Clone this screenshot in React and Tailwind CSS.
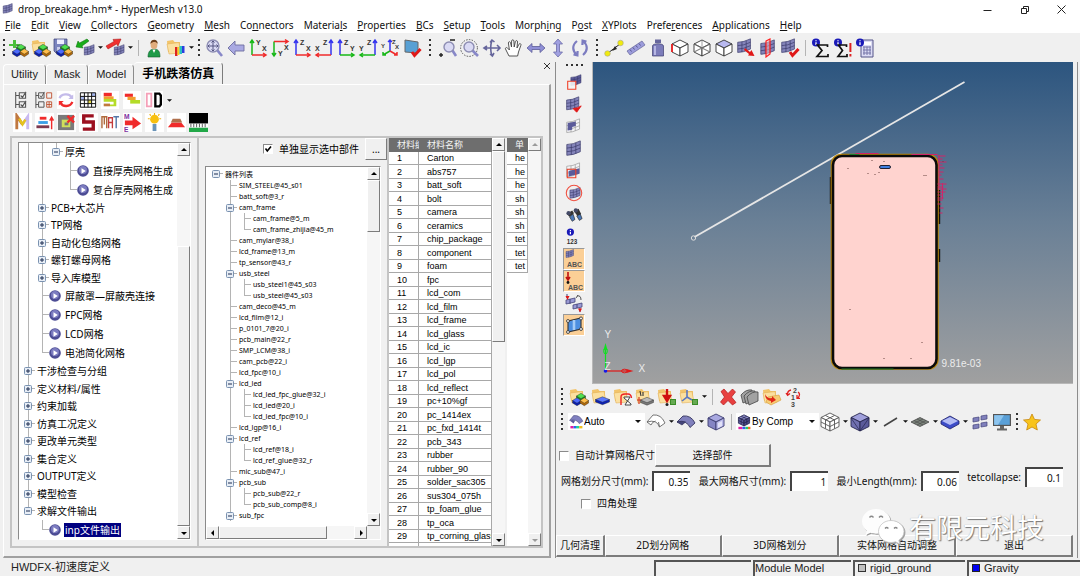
import { useState } from 'react';
import clsx from 'clsx';

const MENU = [
  ['', 'F', 'ile'], ['', 'E', 'dit'], ['', 'V', 'iew'], ['', 'C', 'ollectors'], ['', 'G', 'eometry'],
  ['', 'M', 'esh'], ['Co', 'n', 'nectors'], ['Materia', 'l', 's'], ['', 'P', 'roperties'], ['', 'B', 'Cs'],
  ['', 'S', 'etup'], ['', 'T', 'ools'], ['Morph', 'i', 'ng'], ['P', 'o', 'st'], ['', 'X', 'YPlots'],
  ['Prefe', 'r', 'ences'], ['', 'A', 'pplications'], ['', 'H', 'elp'],
];

// guide codes, one per indent level: | line, t tee, e end, p plus, m minus, c last minus, r root minus
const PROCESS_TREE = [
  ['||c', '厚壳'],
  ['|| t', '直接厚壳网格生成', 'leaf'],
  ['|| e', '复合厚壳网格生成', 'leaf'],
  ['|p', 'PCB+大芯片'],
  ['|p', 'TP网格'],
  ['|p', '自动化包络网格'],
  ['|p', '螺钉螺母网格'],
  ['|p', '导入库模型'],
  ['|t', '屏蔽罩—屏蔽壳连接', 'leaf'],
  ['|t', 'FPC网格', 'leaf'],
  ['|t', 'LCD网格', 'leaf'],
  ['|e', '电池简化网格', 'leaf'],
  ['p', '干涉检查与分组'],
  ['p', '定义材料/属性'],
  ['p', '约束加载'],
  ['p', '仿真工况定义'],
  ['p', '更改单元类型'],
  ['p', '集合定义'],
  ['p', 'OUTPUT定义'],
  ['p', '模型检查'],
  ['c', '求解文件输出'],
  [' e', 'inp文件输出', 'leaf'],
];

const PART_TREE = [
  ['r', '器件列表'],
  [' t', 'SIM_STEEL@45_s01'],
  [' t', 'batt_soft@3_r'],
  [' m', 'cam_frame'],
  [' |t', 'cam_frame@5_m'],
  [' |e', 'cam_frame_zhijia@45_m'],
  [' t', 'cam_mylar@38_i'],
  [' t', 'lcd_frame@13_m'],
  [' t', 'tp_sensor@43_r'],
  [' m', 'usb_steel'],
  [' |t', 'usb_steel1@45_s03'],
  [' |e', 'usb_steel@45_s03'],
  [' t', 'cam_deco@45_m'],
  [' t', 'lcd_film@12_i'],
  [' t', 'p_0101_7@20_i'],
  [' t', 'pcb_main@22_r'],
  [' t', 'SMP_LCM@38_i'],
  [' t', 'cam_pcb@22_i'],
  [' t', 'lcd_fpc@10_i'],
  [' m', 'lcd_led'],
  [' |t', 'lcd_led_fpc_glue@32_i'],
  [' |t', 'lcd_led@20_i'],
  [' |e', 'lcd_led_fpc@10_i'],
  [' t', 'lcd_lgp@16_i'],
  [' m', 'lcd_ref'],
  [' |t', 'lcd_ref@18_i'],
  [' |e', 'lcd_ref_glue@32_r'],
  [' t', 'mic_sub@47_i'],
  [' m', 'pcb_sub'],
  [' |t', 'pcb_sub@22_r'],
  [' |e', 'pcb_sub_comp@8_i'],
  [' m', 'sub_fpc'],
];

const MATERIALS = [
  'Carton', 'abs757', 'batt_soft', 'bolt', 'camera', 'ceramics', 'chip_package', 'component', 'foam', 'fpc',
  'lcd_com', 'lcd_film', 'lcd_frame', 'lcd_glass', 'lcd_ic', 'lcd_lgp', 'lcd_pol', 'lcd_reflect', 'pc+10%gf',
  'pc_1414ex', 'pc_fxd_1414t', 'pcb_343', 'rubber', 'rubber_90', 'solder_sac305', 'sus304_075h', 'tp_foam_glue',
  'tp_oca', 'tp_corning_glass', 'al_6061',
];

const UNITS = ['he', 'he', 'he', 'sh', 'sh', 'sh', 'tet', 'tet', 'tet'];

const RAISED = 'border border-t-white border-l-white border-r-[#7c7c7c] border-b-[#7c7c7c] bg-[#f0f0f0]';
const SUNKEN = 'border border-t-[#8a8a8a] border-l-[#8a8a8a] border-r-white border-b-white';
const UI_FONT = "font-['Noto_Sans','Noto_Sans_CJK_SC',sans-serif]";
const SANS = "font-['Liberation_Sans','Noto_Sans_CJK_SC',sans-serif]";

/* ---------- drawing pieces ---------- */

function Svg({ children, className = 'h-5 w-5' }) {
  return (
    <svg viewBox="0 0 20 20" fill="none" className={className} aria-hidden="true">
      {children}
    </svg>
  );
}

function Patch({ x = 0, y = 0, s = 1, fill = '#8484ba', line = '#3a3a6a' }) {
  return (
    <g transform={`translate(${x} ${y}) scale(${s})`} stroke={line} strokeWidth="0.8">
      <path d="M2 5Q9 5 17 1V13Q9 17 2 17Z" fill={fill} />
      <path d="M2 9Q9 9 17 5M2 13Q9 13 17 9M7 4.6V16.6M12 3.2V15.2" />
    </g>
  );
}

function Cube({ x = 10, y = 10, r = 8, top = '#fff', left = '#fff', right = '#fff', line = '#333' }) {
  const h = r / 2;
  return (
    <g stroke={line} strokeWidth="0.9" strokeLinejoin="round">
      <path d={`M${x} ${y - r}L${x + r} ${y - h}L${x} ${y}L${x - r} ${y - h}Z`} fill={top} />
      <path d={`M${x - r} ${y - h}L${x} ${y}V${y + r}L${x - r} ${y + h}Z`} fill={left} />
      <path d={`M${x + r} ${y - h}L${x} ${y}V${y + r}L${x + r} ${y + h}Z`} fill={right} />
    </g>
  );
}

function Slab({ x, y, w = 5, top, side }) {
  return (
    <g>
      <path d={`M${x - w} ${y}V${y + 2.5}L${x} ${y + 5.2}L${x + w} ${y + 2.5}V${y}Z`} fill={side} stroke="#222" strokeWidth="0.4" />
      <path d={`M${x} ${y - 2.7}L${x + w} ${y}L${x} ${y + 2.7}L${x - w} ${y}Z`} fill={top} stroke="#222" strokeWidth="0.4" />
    </g>
  );
}

function Slabs() {
  return (
    <>
      <Slab x={12} y={9} w={4.5} top="#4fe04f" side="#159215" />
      <Slab x={8} y={13.5} w={4.5} top="#4d6bff" side="#0b1fb0" />
      <Slab x={15.3} y={13.5} w={4.3} top="#ffbd4a" side="#b36a08" />
    </>
  );
}

function Folder() {
  return (
    <>
      <path d="M1 3L7 2L8.5 4H14V14H2Z" fill="#f2c46a" />
      <path d="M1 6L13 4.6L15 15L3 16Z" fill="#fbe0a0" stroke="#dfa84a" strokeWidth="0.5" />
    </>
  );
}

function Glass({ x = 9, y = 8, r = 5, dashed }) {
  return (
    <>
      {dashed && <circle cx="9" cy="10" r="8.4" stroke="#333" strokeDasharray="1.5 1.3" strokeWidth="0.8" />}
      <path d={`M${x + r * 0.7} ${y + r * 0.7}L18 18`} stroke="#8888c8" strokeWidth="2.6" />
      <circle cx={x} cy={y} r={r} fill="#dadaf4" stroke="#8d8db3" strokeWidth="1.4" />
    </>
  );
}

const RED = '#f02b2b';
const GREEN = '#18b818';
const BLUE = '#3535ee';

function Axis({ v, h, right, down, a, b }) {
  const x = right ? 17 : 4;
  const y = down ? 3.5 : 17;
  const tipY = down ? 18 : 2;
  const tipX = right ? 2 : 18;
  const dy = down ? -3 : 3;
  const dx = right ? 3 : -3;
  return (
    <Svg>
      <path d={`M${x} ${y}V${tipY}M${x - 2} ${tipY + dy}L${x} ${tipY}L${x + 2} ${tipY + dy}`} stroke={v} strokeWidth="1.5" />
      <path d={`M${x} ${y}H${tipX}M${tipX + dx} ${y - 2}L${tipX} ${y}L${tipX + dx} ${y + 2}`} stroke={h} strokeWidth="1.5" />
      <g className="font-['Liberation_Sans',sans-serif] text-[7px] font-bold" fill="#333">
        <text x={right ? 9 : 8} y={down ? 18 : 7}>{a}</text>
        <text x={right ? 1 : 14} y={down ? 12 : 13}>{b}</text>
      </g>
    </Svg>
  );
}

const redCheck = <path d="M10 14L12.5 17.5L18.5 11" stroke="#e01818" strokeWidth="3" />;
const info = (
  <>
    <circle cx="5" cy="4.5" r="4" fill="#1a1ab8" />
    <path d="M5 2.2V3.2M5 4.2V7" stroke="#fff" strokeWidth="1.3" />
  </>
);

const ICONS = {
  app: <Patch />,
  addModel: <><path d="M1 6H5V2H8V6H12V8H8V10H5V8H1Z" fill="#4cc03c" transform="translate(-1 0)" /><path d="M8 7L12 9" stroke="#555" /><Slabs /></>,
  open: <><Folder /><Slabs /></>,
  save: <><path d="M1 1H14V15H3L1 13Z" fill="#7b84be" stroke="#3a3f78" strokeWidth="0.7" /><path d="M4 1.5H11V6H4Z" fill="#eef" /><path d="M4 9H11V15H4Z" fill="#c9cdea" /><Slabs /></>,
  importIcon: <><Patch x={8} y={6} s={0.65} /><path d="M12 1L14 3L7 8L8 10L1 9L3 3L4.5 5Z" fill="#19ad19" stroke="#0a6b0a" strokeWidth="0.5" /></>,
  exportIcon: <><Patch x={8} y={6} s={0.65} /><path d="M1 8L9 3.4L8 1.4L16 1L13 8L11.6 6L3 11Z" fill="#f03030" stroke="#9b0c0c" strokeWidth="0.5" /></>,
  user: <><path d="M4 19C4 13 7 11 10 11C14 11 16 13 16 19Z" fill="#1e9b48" stroke="#125e2c" strokeWidth="0.6" /><ellipse cx="10" cy="6.5" rx="3.4" ry="4.6" fill="#e0ac7c" /><path d="M6.4 6C6 1 14 0 13.7 6C12 3.6 9 3.4 6.4 6Z" fill="#6b3f1c" /><path d="M8.4 11.5H11.6L10 15Z" fill="#fff" /></>,
  colorFolder: <><Folder /><path d="M9 9H11.5V18H9Z" fill="#d22" /><path d="M11.5 9H13.5V17H11.5Z" fill="#f6d020" /><path d="M13.5 8H16V16H13.5Z" fill="#2ac0c0" /><path d="M16 8H18.5V15H16Z" fill="#2a3ce0" /></>,
  fit: <><Glass x={9} y={8} r={6} /><path d="M9 3V13M4 8H14M7.500 4.500L9 3L10.500 4.500M7.500 11.500L9 13L10.500 11.500M5.500 6.500L4 8L5.500 9.500M12.500 6.500L14 8L12.500 9.500" stroke="#555580" strokeWidth="1" /></>,
  back: <path d="M2 10L9 3V7H18V13H9V17Z" fill="#a9a9e2" stroke="#6d6d9f" strokeWidth="0.9" />,
  iso: <><path d="M10 13V2M8 4L10 2L12 4" stroke={BLUE} strokeWidth="1.5" /><path d="M10 13L3 17M3 14V17H6" stroke={GREEN} strokeWidth="1.5" /><path d="M10 13L17 17M14 17H17V14" stroke={RED} strokeWidth="1.5" /><g className="font-['Liberation_Sans',sans-serif] text-[6px] font-bold" fill="#333"><text x="1" y="10">Y</text><text x="12" y="6">Z</text><text x="15" y="11">X</text></g></>,
  screenCheck: <><path d="M3 2L16 4V15L3 14Z" fill="#58a0d4" stroke="#666" strokeWidth="1" />{redCheck}</>,
  zoomInOut: <><Glass x={11} y={9} r={5} /><path d="M12 2H17M1 17H5M3 15V19" stroke="#222" strokeWidth="1.4" /></>,
  zoomCircle: <Glass x={9} y={9} r={5} dashed />,
  rotate: <path d="M2 10H18M10 2C8 8 8 12 10 18M15 7L18 10L15 13M8 4.5L10 2L12.5 4M5 8L2 10L5 12M8 16L10.4 18L12 15" stroke="#66669c" strokeWidth="1.6" />,
  hand: <path d="M5 18L1.5 11C1 9.5 3 9 4 10.5L5.4 12L4.4 5C4.3 3.4 6.2 3.2 6.6 5L7.5 9L7.6 3C7.7 1.4 9.8 1.4 9.9 3L10.2 9L11.4 3.6C11.8 2 13.8 2.4 13.5 4L13 10L15 6.2C15.9 5 17.4 5.8 16.9 7.2L14.5 14L13.6 18Z" fill="#fff" stroke="#444" strokeWidth="0.9" />,
  panH: <path d="M1 10L6 5.5V8.5H14V5.5L19 10L14 14.5V11.5H6V14.5Z" fill="#8f8fd6" stroke="#5d5d98" strokeWidth="0.8" />,
  panV: <path d="M10 1L14.5 6H11.5V14H14.5L10 19L5.5 14H8.5V6H5.5Z" fill="#a0a0e0" stroke="#6c6ca8" strokeWidth="0.8" />,
  spin: <path d="M7 3C2 7 2 13 7 17M3.5 16.5L7.4 17.4L7.6 13M13 17C18 13 18 7 13 3M16.5 3.5L12.6 2.6L12.4 7" stroke="#7c7cc0" strokeWidth="2.2" />,
  distance: <><path d="M4 15L16 6" stroke="#222" strokeWidth="1" strokeDasharray="7 1" /><path d="M8 13L11 8L13 11Z" fill="#222" /><circle cx="3.5" cy="15.5" r="2.8" fill="#f0ea10" stroke="#999" strokeWidth="0.5" /><circle cx="16.5" cy="5" r="2.8" fill="#f0ea10" stroke="#999" strokeWidth="0.5" /></>,
  ruler: <><path d="M1 13L16 3L19 7L4 17Z" fill="#9c9cdc" stroke="#66669a" strokeWidth="0.7" /><path d="M4 11.5L5.5 13.5M7 9.5L8.5 11.5M10 7.5L11.5 9.5M13 5.5L14.5 7.5" stroke="#44447a" strokeWidth="0.8" /></>,
  mass: <><path d="M7 1.5H13V5H7Z" fill="#66669c" /><path d="M4.500 8C4.500 5 15.500 5 15.500 8V18H4.500Z" fill="#7c7cba" stroke="#3d3d70" strokeWidth="0.7" /><path d="M7 8V17" stroke="#c6c6ee" strokeWidth="1.6" /></>,
  cubeRed: <><Cube /><path d="M2 6V14" stroke="#e22" strokeWidth="1.8" /></>,
  cubeWire: <><Cube /><path d="M10 2V10L2 14M10 10L18 14M2 6L18 14M18 6L2 14" stroke="#777" strokeWidth="0.7" /></>,
  cubeTop: <Cube top="#b9b9f0" />,
  meshArrow: <><Patch s={0.85} /><path d="M9 10L14 14L15.5 12L18.5 18L12 17.6L13 16L8 12Z" fill="#e01818" /></>,
  meshCut: <><Patch x={1} y={1} s={0.9} /><path d="M8 3L12 1V16L8 19Z" stroke="#f22" strokeWidth="1.2" fill="#f8b0b0" fillOpacity="0.5" /></>,
  meshCheck: <><Patch s={0.85} />{redCheck}</>,
  sum: <>{info}<path d="M16.5 9V7H6.5L11 12.5L6 18.5H17V16" stroke="#111" strokeWidth="1.7" /></>,
  sumBang: <>{info}<path d="M13.5 9V7H5.5L9.5 12.5L5 18.5H14V16" stroke="#111" strokeWidth="1.7" /><path d="M17.4 5V14M17.4 16V18.5" stroke="#d22" strokeWidth="2" /></>,
  calc: <><path d="M6 2H18V19H6Z" fill="#dcdcf4" stroke="#555588" strokeWidth="1" /><path d="M8 4H16V7H8Z" fill="#fff" /><path d="M8 9H16M8 12H16M8 15H16M9 8.5V17M12 8.5V17M15 8.5V17" stroke="#7777a8" strokeWidth="1" />{info}</>,

  treeCheck: <path d="M3 1V19M3 5H7M3 15H7M7 2H14V8H7ZM7 12H14V18H7ZM8.5 5L10.5 7L14.5 1M8.5 15L10.5 17L14.5 11" stroke="#555" strokeWidth="1.2" />,
  treeCheck2: <><path d="M1 1V19M1 5H4M1 15H4M4 2H10V8H4ZM4 12H10V18H4ZM5.5 5L7 7L10.5 1" stroke="#555" strokeWidth="1.1" /><path d="M13 2H18.5V8H13ZM13 12H18.5V18H13ZM13 15H18.5M15.7 12V18" stroke="#c0502e" strokeWidth="1" /></>,
  refresh: <><path d="M3 8C4 3 14 2 16 7" stroke="#c4bbea" strokeWidth="2.6" /><path d="M18 4V9H12.5Z" fill="#c4bbea" /><path d="M17 12C15 18 6 18 4 13" stroke={RED} strokeWidth="2.6" /><path d="M2 16V11H7.5Z" fill={RED} /></>,
  grid: <><path d="M2 2H18V18H2Z" fill="#fff" /><path d="M2 6H6V10H2ZM14 2H18V6H14Z" fill="#a8b8f0" /><path d="M10 10H14V14H10Z" fill="#e4d84a" /><path d="M1.5 2H18.5V18H1.5ZM1.5 6H18.5M1.5 10H18.5M1.5 14H18.5M6 2V18M10 2V18M14 2V18" stroke="#111" strokeWidth="1.1" /></>,
  stackA: <><path d="M3 2H12V6H3Z" fill={RED} /><path d="M3 6H14V9H3Z" fill="#f0a030" /><path d="M3 9H17V17H10V15H14V12H3Z" fill="#b4dc28" /><path d="M3 14H10V17H3Z" fill="#c07a3c" /></>,
  stackB: <><path d="M2 3H11V6.5H2Z" fill={RED} /><path d="M5 6.5H14V10H5Z" fill="#f0a030" /><path d="M8 10H19V14H8Z" fill="#b4dc28" /></>,
  twoD: <><path d="M2 3H7V17H2Z" stroke="#f5a0b8" strokeWidth="2" /><path d="M11.500 3H16L17.6 5V15L16 17H11.500Z" stroke="#000" strokeWidth="2.6" /></>,
  letterM: <><path d="M4 17V3L10 12" stroke="#c07840" strokeWidth="3" /><path d="M10 12L15.500 4V17" stroke="#c9b9f0" strokeWidth="3" /><path d="M6.5 6L10 12L13 7" stroke="#e5c31e" strokeWidth="2.6" /></>,
  stackUp: <><path d="M5 4H12V7H5Z" fill={RED} /><path d="M3.5 8.5H13.5V11.5H3.5Z" fill="#3aa0e8" /><path d="M1.5 13H15V16H1.5Z" fill="#7c3a50" /><path d="M17.5 17V5M15.5 8L17.5 4.5L19.5 8" stroke={RED} strokeWidth="1.5" /></>,
  boxX: <><path d="M1 2H18V18H1Z" fill="#7a7a7a" /><path d="M5 7H14V15H5Z" fill="#cfe05a" /><path d="M8 10H12V13H8Z" fill="#777" /><path d="M11 3L18 10M18 3L11 10" stroke={RED} strokeWidth="2.6" /></>,
  letterS: <path d="M15.5 3H5V9.5H15V17H4" stroke="#9c1020" strokeWidth="3.6" />,
  mat: <><path d="M1 16V4H6V16M3.5 4V12" stroke="#b06a3c" strokeWidth="1.5" /><path d="M8 16V5H12V16M8 10H12" stroke="#c23c3c" strokeWidth="1.4" /><path d="M13 4H19M16 4V16" stroke="#5578a8" strokeWidth="1.5" /></>,
  meArrow: <><path d="M2 8H10V4L19 11L10 17V13H2Z" fill={RED} /><g className="font-['Liberation_Sans',sans-serif] text-[7px] font-bold" fill="#8030a0"><text x="1" y="6">M</text><text x="1" y="20">E</text></g></>,
  bulb: <><circle cx="10" cy="6.5" r="4.6" fill="#f8c010" /><path d="M10 0V2M3 6H5M15 6H17M5 1L6 3M15 1L14 3" stroke="#f0b010" strokeWidth="1.2" /><path d="M8 11.5H12V19H8Z" fill="#6a94b8" /></>,
  wedge: <><path d="M1 15L5 10H15L19 15Z" fill={RED} /><path d="M6 6H14L16 10H4Z" fill="#b0704c" /></>,
  chip: <><path d="M0 0H20V11H0Z" fill="#000" /><path d="M0 15.5H20V20H0Z" fill="#22a848" /><path d="M2 11V15M5 11V15M8 11V15M11 11V15M14 11V15M17 11V15" stroke="#555" strokeWidth="1" /></>,

  maskA: <><Patch x={5} s={0.75} fill="#5b5b9a" /><path d="M3 8H12V17H3Z" stroke="#f04028" strokeWidth="1.2" fill="#f4f4f4" fillOpacity="0.9" /></>,
  maskB: <><Patch s={0.9} /><path d="M9 14L13 18L18 11L14 13Z" fill="#e01818" stroke="#e01818" /></>,
  maskC: <><Patch s={0.95} fill="#f4f4f6" line="#999" /><path d="M3 5.500L12 4V9L8 10V13L3 14Z" fill="#5b5b9a" /></>,
  maskD: <Patch />,
  maskE: <><Patch s={0.95} fill="#f4f4f6" line="#999" /><path d="M4 10L16 7V13L4 16Z" fill="#5b5b9a" /><path d="M2.5 8H12V17.5H2.5Z" stroke="#f04028" strokeWidth="1.2" /></>,
  maskF: <><Patch x={4} y={3} s={0.75} /><circle cx="10" cy="10" r="8.6" stroke="#f05040" strokeWidth="1.2" /></>,
  find: <><path d="M2 9L8 5L10 8L5 12ZM10 6L15 3L18 9L14 11Z" fill="#333" /><path d="M5 12L9 9L11 15L8 17ZM13 11L17 9L19 14L16 16Z" fill="#4a78b8" stroke="#222" strokeWidth="0.7" /><circle cx="4" cy="8" r="2.4" fill="#444a66" /><circle cx="12" cy="5" r="2.4" fill="#444a66" /></>,
  numbers: <><g transform="translate(1 0)">{info}</g><text x="2" y="18" className="font-['Liberation_Sans',sans-serif] text-[7px] font-bold" fill="#333">123</text></>,
  abcMesh: <><Patch x={1} y={0} s={0.5} /><text x="3" y="18" className="font-['Liberation_Sans',sans-serif] text-[7px] font-bold" fill="#555">ABC</text></>,
  abcLoad: <><path d="M4 1V8M2 6L4 9L6 6" stroke="#c01010" strokeWidth="1.6" /><circle cx="4" cy="11.5" r="1.4" fill="#111" /><text x="4" y="18.5" className="font-['Liberation_Sans',sans-serif] text-[7px] font-bold" fill="#555">ABC</text></>,
  supp: <><path d="M2 7L11 5V9L2 11ZM9 12L18 10V14L9 16Z" fill="#9a9ad4" stroke="#44447a" strokeWidth="0.8" /><path d="M6 6L6 11M13 11V15M3 1V5M16 15V19" stroke="#44447a" /><path d="M1.5 3L3.5 7L5.5 3ZM14 15.5L16 19.5L18 15.5Z" fill="#e01818" /><path d="M13 3Q17 2 17 7M12 5L14 2" stroke="#555" strokeWidth="1" /></>,
  shape: <><path d="M4 6L17 3V14L4 17Z" fill="#4c8fe0" stroke="#333" strokeWidth="1.1" /><path d="M10 5V15" stroke="#a4ccf6" strokeWidth="2.6" /><g fill="#eee" stroke="#333" strokeWidth="0.8"><circle cx="4" cy="6" r="1.5" /><circle cx="17" cy="3.4" r="1.5" /><circle cx="17" cy="14" r="1.5" /><circle cx="4" cy="17" r="1.5" /></g></>,

  folderSlab: <><Folder /><Slab x={11.5} y={12.5} w={7} top="#5a78ff" side="#0c22b8" /></>,
  folderFlip: <><Folder /><path d="M8 18V10Q8 7 12 7H15Q18 7 18.500 11" stroke="#e22" strokeWidth="1.4" /><path d="M11 10H17L12 18H18V17L11 11Z" stroke="#444" strokeWidth="1" fill="#fff" /></>,
  folderGray: <><Folder /><Slab x={12} y={13} w={6.5} top="#b8b8b8" side="#777" /><path d="M5 4L6 9M8 5V9" stroke="#333" strokeWidth="1.1" /><path d="M2 13H6M4 10V17" stroke="#d03020" strokeWidth="1.1" /></>,
  folderLoad: <><Folder /><path d="M10 2V11M7 9L10 14L13 9Z" stroke="#d01010" strokeWidth="2.4" fill="#d01010" /><circle cx="10" cy="17.5" r="1.5" fill="#222" /><path d="M13 12H19V18H13Z" fill="#3c8c28" /><path d="M14 14H18M14 16H18" stroke="#b4e4a0" strokeWidth="0.7" /></>,
  folderSys: <><Folder /><path d="M8 3V10L3 14M8 10L13 13" stroke="#5a78c0" strokeWidth="1.6" /><path d="M13 12H19V18H13Z" fill="#3c8c28" /><path d="M14 14H18M14 16H18" stroke="#b4e4a0" strokeWidth="0.7" /></>,
  remove: <path d="M3 4.500L6 2L10 6.500L14.500 2L17.500 5L13.500 10L18 15.500L14.500 18L10 13.500L5.500 18L2.500 15L6.500 10Z" fill="#e84040" stroke="#b01818" strokeWidth="0.7" strokeLinejoin="round" />,
  cards: <g fill="#a2a2a2" stroke="#444" strokeWidth="0.8"><path d="M1 8Q6 2 12 3V12L3 16Z" /><path d="M4 9Q9 3 15 4V13L6 17Z" /><path d="M7 10Q12 4 18 5V14L9 18Z" /></g>,
  folderMove: <><Folder /><path d="M6 10L17 8L19 13L9 18L4 15Z" fill="#f6cc74" stroke="#d69a38" strokeWidth="0.6" /><path d="M3 7Q5 12 10 11V9L14 13L9 16V14Q3 13 3 7Z" fill="#e02818" /></>,
  renumber: <><g className="font-['Liberation_Sans',sans-serif] text-[7px] font-bold" fill="#444"><text x="9" y="6">2</text><text x="7" y="13">1</text><text x="7" y="20">3</text></g><path d="M7 3Q3 4 3.6 8M2 6L3.6 8.4L6 6.4M14 5Q17 7 14 11M13 8V11.4H16" stroke="#e02020" strokeWidth="1.3" /></>,
  shadeAuto: <><path d="M7 2Q15 1 18.500 9L14 12Q11 6 2 8Z" fill="#8080c0" stroke="#444478" strokeWidth="0.7" /><path d="M2 8Q6 7 9 8L7 12Z" fill="#5a5a98" /><path d="M3 15H7V18H3Z" fill="#e020a0" /><path d="M7 15H10V18H7Z" fill="#3060f0" /><path d="M10 15H14V18H10Z" fill="#20d0a0" /><path d="M14 15H18V18H14Z" fill="#f0c020" /></>,
  shellWire: <path d="M7 3Q15 2 19 11L13.500 15Q11 7 1 10ZM1 10L5 13Q6 10 9.500 9M13.500 15L12.500 10" fill="#fff" stroke="#666" strokeWidth="0.9" strokeLinejoin="round" />,
  shellFill: <><path d="M7 4Q15 3 19 11L14 15.500Q11 8 1 10Z" fill="#8080bc" stroke="#33335e" strokeWidth="0.9" strokeLinejoin="round" /><path d="M1 10Q6 8.500 9.500 10L6 13Z" fill="#44447a" stroke="#33335e" strokeWidth="0.7" /></>,
  cubeGlass: <><Cube top="#a8a8e0" left="#8585c4" right="#b8b8ea" line="#3d3d70" /><path d="M12 11L16 9V14L12 16Z" fill="#e2e2f8" /></>,
  cubeComp: <><Cube y={8} r={7} top="#8c8cc8" left="#5d5d9c" right="#4a4a88" line="#1d1d44" /><path d="M6.5 2.8L13.5 6.2V13M13.5 2.8L6.5 6.2V13M3 8L10 11.5L17 8" stroke="#1d1d44" strokeWidth="0.8" /><path d="M3 16H8V19H3Z" fill="#e020a0" /><path d="M8 16H12V19H8Z" fill="#3060f0" /><path d="M12 16H15V19H12Z" fill="#20d060" /><path d="M15 16H18V19H15Z" fill="#f07020" /></>,
  cubeGrid: <><Cube line="#555" r={9} /><path d="M5.5 3.5L14.5 8V16.5M14.5 3.5L5.5 8V16.5M1 10L10 14.5L19 10" stroke="#555" strokeWidth="0.9" /></>,
  cubeSolid: <><Cube r={9} top="#a0a0dc" left="#7070b0" right="#5a5a9a" line="#26264e" /><path d="M1 6L10 19M19 6L10 19" stroke="#26264e" strokeWidth="0.7" /></>,
  line: <path d="M4 14L17 6" stroke="#444" strokeWidth="1.5" />,
  quad: <><path d="M1 10L10 5.5L19 10L10 14.5Z" fill="#7c857c" stroke="#444" strokeWidth="0.8" /><path d="M4 8.5L13 13M7 7L16 11.5M4 11.5L13 7M7 13L16 8.5" stroke="#444" strokeWidth="0.6" /></>,
  slabBlue: <><path d="M1 9L10 4L19 9V12L10 17L1 12Z" fill="#3c4cc8" stroke="#222266" strokeWidth="0.8" /><path d="M2 9L10 5L18 9L10 13Z" fill="#b4bcf4" /></>,
  tiles: <g fill="#8080bc" stroke="#44447a" strokeWidth="0.7"><path d="M3 6L9 5V9L3 10ZM11 4L17 3V7L11 8ZM3 13L9 12V16L3 17ZM11 11L17 10V14L11 15Z" /></g>,
  monitor: <><path d="M1 2H19V14H1Z" fill="#555" /><path d="M2.2 3.2H17.8V12.8H2.2Z" fill="#5aa0d8" /><path d="M2.2 3.2H12L6 12.8H2.2Z" fill="#8cc4ee" /><path d="M8 14H12V16.5H15V18.5H5V16.5H8Z" fill="#666" /></>,
  star: <path d="M10 2L12.5 7.400L18.500 8L14 12L15.300 18L10 15L4.700 18L6 12L1.500 8L7.500 7.400Z" fill="#f8c41c" stroke="#c8860a" strokeWidth="0.8" />,
};

/* ---------- small controls ---------- */

function Tool({ name, label, children, className }) {
  return (
    <button type="button" aria-label={label || name} className={clsx('grid h-[22px] w-[22px] shrink-0 place-items-center', className)}>
      {children || <Svg>{ICONS[name]}</Svg>}
    </button>
  );
}

function Caret() {
  return (
    <button type="button" aria-label="more" className="grid h-[22px] w-2 shrink-0 place-items-center">
      <svg viewBox="0 0 6 3" className="h-[3px] w-[5px]" aria-hidden="true"><path d="M0 0H6L3 3Z" fill="#111" /></svg>
    </button>
  );
}

const Sep = () => <span className="mx-1 h-4 w-px shrink-0 bg-[#b4b4b4]" />;

const Handle = ({ className = 'w-3' }) => (
  <span className={clsx('flex h-[22px] shrink-0 flex-col items-center justify-center gap-[3px]', className)}>
    {[0, 1, 2, 3].map((i) => <i key={i} className="h-0.5 w-0.5 bg-[#333]" />)}
  </span>
);

function Arrow({ dir, dim }) {
  const d = { up: 'M1 5L4 2L7 5Z', down: 'M1 3L4 6L7 3Z', left: 'M5 1L2 4L5 7Z', right: 'M3 1L6 4L3 7Z' }[dir];
  return (
    <button type="button" aria-label={`scroll ${dir}`} className={clsx('grid h-[13px] w-[13px] shrink-0 place-items-center', RAISED)}>
      <svg viewBox="0 0 8 8" className="h-2 w-2" aria-hidden="true"><path d={d} fill={dim ? '#9a9a9a' : '#000'} /></svg>
    </button>
  );
}

function VScroll({ thumb, dim }) {
  return (
    <div className="flex w-[13px] shrink-0 flex-col bg-[#f6f6f6]">
      <Arrow dir="up" dim={dim} />
      <div className="flex min-h-0 flex-1 flex-col">{thumb && <div className={clsx(RAISED, thumb)} />}</div>
      <Arrow dir="down" dim={dim} />
    </div>
  );
}

function Check({ label, checked, onChange }) {
  return (
    <label className="flex items-center gap-1.5">
      <span className="relative grid h-[10px] w-[10px]">
        <input type="checkbox" checked={checked} onChange={(e) => onChange(e.target.checked)} className={clsx('h-full w-full appearance-none bg-white', SUNKEN)} />
        {checked && (
          <svg viewBox="0 0 10 10" fill="none" className="pointer-events-none absolute inset-0" aria-hidden="true">
            <path d="M2.5 4.5L4.3 7L8 2.5" stroke="#000" strokeWidth="1.6" />
          </svg>
        )}
      </span>
      {label}
    </label>
  );
}

/* ---------- trees ---------- */

function Guide({ kind }) {
  const box = 'pmcr'.includes(kind);
  return (
    <span className="grid w-3.5 shrink-0 [&>*]:[grid-area:1/1]">
      {'|tpm'.includes(kind) && <i className="ml-[7px] border-l border-[#b4b4b4]" />}
      {'ec'.includes(kind) && <i className="ml-[7px] h-1/2 border-l border-[#b4b4b4]" />}
      {(box || 'te'.includes(kind)) && <i className="ml-[7px] h-1/2 border-b border-[#b4b4b4]" />}
      {box && (
        <svg viewBox="0 0 8 8" className="h-2 w-2 place-self-center" aria-hidden="true">
          <rect x="0.5" y="0.5" width="7" height="7" rx="1" fill="#e8eef6" stroke="#7a92b0" />
          <path d={kind === 'p' ? 'M2 4H6M4 2V6' : 'M2 4H6'} stroke="#1c2c50" strokeWidth="1" />
        </svg>
      )}
    </span>
  );
}

function Play() {
  return (
    <svg viewBox="0 0 12 12" className="h-3 w-3 shrink-0 self-center" aria-hidden="true">
      <circle cx="6" cy="6" r="5.8" fill="#4c4c94" />
      <circle cx="6" cy="5" r="4" fill="#7c7cc0" />
      <path d="M4.5 3.2L8.8 6L4.5 8.8Z" fill="#fff" />
    </svg>
  );
}

function ProcessTree() {
  const [active, setActive] = useState('inp文件输出');
  return (
    <ul className={clsx('min-w-0 flex-1 overflow-hidden bg-white pl-0.5 text-[10px]', UI_FONT)}>
      {PROCESS_TREE.map(([guides, label, leaf]) => (
        <li key={label} onClick={() => setActive(label)} className={clsx('flex whitespace-nowrap', leaf ? 'h-[19px]' : 'h-[17px] odd:h-[18px]')}>
          {[...guides].map((g, i) => <Guide key={i} kind={g} />)}
          {leaf && <Play />}
          <span className={clsx('self-center px-px leading-[14px]', leaf ? 'ml-[3px]' : 'ml-px', active === label && 'bg-[#000080] text-white')}>{label}</span>
        </li>
      ))}
    </ul>
  );
}

function PartTree() {
  return (
    <ul className={clsx('min-w-0 flex-1 overflow-hidden bg-white pl-[3px] pt-px text-[7px]', UI_FONT)}>
      {PART_TREE.map(([guides, label]) => (
        <li key={label} className="flex h-[11px] whitespace-nowrap first:h-3">
          {[...guides].map((g, i) => <Guide key={i} kind={g} />)}
          <span className="ml-0.5 self-center leading-[11px]">{label}</span>
        </li>
      ))}
    </ul>
  );
}

/* ---------- left side ---------- */

const CELL = 'border-b border-r border-[#a8a8a8] overflow-hidden p-0 pl-2 whitespace-nowrap';

function MaterialTable() {
  return (
    <div className="flex min-w-0 flex-[116]">
      <div className="min-w-0 flex-1 overflow-hidden">
        <table className={clsx('w-full table-fixed border-separate border-spacing-0 bg-white text-[9px] leading-3', SANS)}>
          <thead>
            <tr className="h-3.5 bg-[#6e6e6e] text-left text-[#f4f4f4]">
              <th className="w-[30px] overflow-hidden p-0 pl-2 font-normal whitespace-nowrap">材料编号</th>
              <th className="p-0 pl-2 font-normal">材料名称</th>
            </tr>
          </thead>
          <tbody>
            {MATERIALS.map((m, i) => (
              <tr key={m} className="h-[13px] even:h-3.5">
                <td className={CELL}>{i + 1}</td>
                <td className={CELL}>{m}</td>
              </tr>
            ))}
          </tbody>
        </table>
      </div>
      <VScroll thumb="h-1/2" />
    </div>
  );
}

function UnitTable() {
  return (
    <div className="flex min-w-0 flex-[34] bg-white">
      <div className="min-w-0 flex-1 overflow-hidden">
        <table className={clsx('w-full table-fixed border-separate border-spacing-0 text-[9px] leading-3', SANS)}>
          <thead>
            <tr className="h-3.5 bg-[#6e6e6e] text-left text-[#f4f4f4]">
              <th className="overflow-hidden p-0 pl-2 font-normal whitespace-nowrap">单</th>
            </tr>
          </thead>
          <tbody>
            {UNITS.map((u, i) => (
              <tr key={i} className="h-[13px] even:h-3.5"><td className={CELL}>{u}</td></tr>
            ))}
          </tbody>
        </table>
      </div>
      <VScroll dim />
    </div>
  );
}

function LeftPanel() {
  const [only, setOnly] = useState(true);
  const tabs = ['Utility', 'Mask', 'Model'];
  return (
    <section className="flex min-h-0 min-w-0 flex-col pl-[3px] pr-0.5">
      <div className="flex h-[22px] shrink-0">
        <div role="tablist" className={clsx('flex items-end text-[11px] text-[#222]', SANS)}>
          {tabs.map((t) => (
            <button key={t} type="button" role="tab" aria-selected="false" className="h-5 rounded-t-sm border-l border-r border-t border-l-white border-r-[#8c8c8c] border-t-white px-[7px]">{t}</button>
          ))}
          <button type="button" role="tab" aria-selected="true" className="h-[22px] rounded-t-sm border-r border-t border-r-[#7c7c7c] border-t-white px-2 text-[12px] font-bold text-black">手机跌落仿真</button>
        </div>
        <button type="button" aria-label="close panel" className="ml-auto h-2 w-2 self-start">
          <svg viewBox="0 0 8 8" className="h-2 w-2" aria-hidden="true"><path d="M1 1L7 7M7 1L1 7" stroke="#333" /></svg>
        </button>
      </div>

      <div className="flex min-h-0 flex-1 flex-col border-b-2 border-l border-r-2 border-t border-b-[#a0a0a0] border-l-white border-r-[#a0a0a0] border-t-white px-1.5 pb-2 pt-1">
        <div className="flex h-[22px] items-center pl-px">
          {['treeCheck', 'treeCheck2', 'refresh', 'grid', 'stackA', 'stackB', 'twoD'].map((n) => (
            <Tool key={n} name={n}><Svg className={clsx('h-[18px] w-[18px]', !n.startsWith('tree') && 'bg-white')}>{ICONS[n]}</Svg></Tool>
          ))}
          <Caret />
        </div>
        <div className="mb-[3px] flex h-[22px] items-center pl-px">
          {['letterM', 'stackUp', 'boxX', 'letterS', 'mat', 'meArrow', 'bulb', 'wedge', 'chip'].map((n) => (
            <Tool key={n} name={n}><Svg className="h-[19px] w-[19px] bg-white">{ICONS[n]}</Svg></Tool>
          ))}
        </div>

        <div className="flex min-h-0 flex-1 border-2 border-[#c4c4c4]">
          <div className="flex w-[187px] shrink-0 border-r-2 border-[#c4c4c4] px-1.5 pb-1.5 pt-1">
            <div className={clsx('flex min-w-0 flex-1', SUNKEN)}>
              <ProcessTree />
              <VScroll thumb="mt-[90px] flex-1" />
            </div>
          </div>
          <div className="flex w-[188px] shrink-0 flex-col">
            <div className={clsx('flex h-[22px] items-center justify-end gap-1.5 text-[10px]', UI_FONT)}>
              <Check label="单独显示选中部件" checked={only} onChange={setOnly} />
              <button type="button" className={clsx('h-[22px] w-[22px]', RAISED)}>...</button>
            </div>
            <div className={clsx('mb-1.5 ml-1.5 mr-1.5 mt-1.5 flex min-h-0 flex-1', SUNKEN)}>
              <div className="flex min-w-0 flex-1 flex-col">
                <div className="flex min-h-0 flex-1"><PartTree /></div>
                <div className="flex bg-[#f6f6f6]">
                  <Arrow dir="left" />
                  <div className="flex flex-1"><div className={clsx('w-4/5', RAISED)} /></div>
                  <Arrow dir="right" />
                </div>
              </div>
              <div className="flex flex-col pb-[13px]"><div className="flex min-h-0 flex-1"><VScroll thumb="h-[52px]" /></div></div>
            </div>
          </div>
          <div className="flex min-w-0 flex-1 gap-0.5 border-l-2 border-[#c4c4c4]">
            <MaterialTable />
            <UnitTable />
          </div>
        </div>
      </div>
    </section>
  );
}

/* ---------- right side ---------- */

function ViewRail() {
  const plain = ['maskA', 'maskB', 'maskC', 'maskD', 'maskE', 'maskF', 'find', 'numbers'];
  const on = 'border border-t-[#999] border-l-[#999] border-r-white border-b-white bg-[#fbcf96]';
  return (
    <div className="flex w-9 shrink-0 flex-col items-center pt-0.5">
      <span className="mb-1.5 flex gap-[3px]">{[0, 1, 2, 3].map((i) => <i key={i} className="h-0.5 w-0.5 bg-[#333]" />)}</span>
      {plain.map((n) => <Tool key={n} name={n}><Svg className="h-[18px] w-[18px]">{ICONS[n]}</Svg></Tool>)}
      <Tool name="abcMesh" className={on} />
      <Tool name="abcLoad" className={on} />
      <Tool name="supp" />
      <Tool name="shape" className={on} />
    </div>
  );
}

// boundary condition ticks beside the phone's corner: [x, y, length]
const TICKS = [
  [344, 94, 8], [344, 97, 5], [344, 100, 9], [345, 103, 4], [345, 106, 6], [345, 110, 5], [345, 113, 3],
  [345, 117, 5], [344, 122, 9], [344, 125, 6], [344, 127, 9], [344, 130, 8], [344, 133, 5], [344, 136, 6],
  [344, 138, 5], [344, 142, 4], [346, 146, 4], [346, 151, 3],
];
const SPECKS = [
  [278, 98], [286, 104], [274, 111], [285, 110], [281, 112], [290, 99], [254, 106], [330, 113], [332, 113],
  [256, 247], [328, 280], [290, 296], [317, 296], [349, 99],
];

function Viewport() {
  return (
    <div className="min-w-0 flex-1 border-b border-l border-[#b8b8b8] bg-linear-to-b from-[#2c557f] via-[#6a8096] to-[#a0a0a0]">
      <svg viewBox="0 0 479 321" className="h-full w-full" fill="none" aria-label="model view">
        <path d="M101 175L371 20" stroke="#e6e6e6" strokeWidth="1.8" />
        <circle cx="100" cy="176" r="2.2" stroke="#dcdcdc" />
        <path d="M237.500 115V142M345.500 128V153M345.500 133V162M345.500 187V200" stroke="#111" strokeWidth="2.4" />
        <rect x="239" y="93.500" width="104.500" height="212.500" rx="9" fill="#ffd3cf" stroke="#b8860b" strokeWidth="3.6" />
        <rect x="239.500" y="94" width="103.500" height="212" rx="9" fill="#ffd3cf" stroke="#0a0a0a" strokeWidth="2.6" />
        <path d="M262 91.500H285" stroke="#d02468" />
        <path d="M256 92.500H266M300 307H248" stroke="#1d7a2a" strokeWidth="1.2" />
        <path d="M318 92.500H344" stroke="#d02468" />
        <rect x="286" y="103.500" width="11" height="3" rx="1.5" fill="#3f7fe0" stroke="#223" />
        {TICKS.map(([x, y, w]) => <path key={y} d={`M${x} ${y}h${w}`} stroke="#d02468" />)}
        <path d="M345.500 93V126M349 121V137" stroke="#d02468" />
        {SPECKS.map(([x, y]) => <rect key={`${x}-${y}`} x={x} y={y} width="1" height="1" fill="#6a4440" />)}
        <path d="M12 309V286" stroke="#10e020" strokeWidth="1.2" />
        <path d="M10 288L12 281L14 288Z" fill="#10e020" />
        <path d="M12 309H34" stroke="#e01818" strokeWidth="1.2" />
        <path d="M33 307L40 309L33 311Z" fill="#e01818" />
        <ellipse cx="12" cy="289" rx="1.800" ry="3" stroke="#10e020" />
        <ellipse cx="31" cy="309" rx="3" ry="1.800" stroke="#e01818" />
        <circle cx="12" cy="309" r="1.800" fill="#1818e8" />
        <g fill="#ececec" className="font-['Liberation_Sans',sans-serif] text-[10px]">
          <text x="11" y="276">Y</text>
          <text x="45" y="310">X</text>
          <text x="11" y="308">Z</text>
          <text x="348" y="305">9.81e-03</text>
        </g>
      </svg>
    </div>
  );
}

function Combo({ icon, label, options, className }) {
  return (
    <span className={clsx('flex h-[17px] items-center bg-white', className)}>
      <Svg className="h-4 w-4 shrink-0">{ICONS[icon]}</Svg>
      <select aria-label={label} className={clsx('min-w-0 flex-1 appearance-none bg-transparent text-[10px]', SANS)}>
        {options.map((o) => <option key={o}>{o}</option>)}
      </select>
      <svg viewBox="0 0 8 4" className="pointer-events-none mr-1 h-[3px] w-[6px]" aria-hidden="true"><path d="M0 0H8L4 4Z" fill="#111" /></svg>
    </span>
  );
}

function Field({ label, id, value, className }) {
  const [v, setV] = useState(value);
  return (
    <div className={clsx('flex items-center gap-1', className)}>
      <label htmlFor={id} className="whitespace-nowrap">{label}</label>
      <input id={id} value={v} onChange={(e) => setV(e.target.value)} className="h-5 w-[38px] border-l-2 border-t-2 border-[#444] bg-white pr-0.5 text-right" />
    </div>
  );
}

function MeshForm() {
  const [auto, setAuto] = useState(false);
  const [corner, setCorner] = useState(false);
  return (
    <div className={clsx('flex min-h-0 flex-1 flex-col text-[10px] text-[#111]', UI_FONT)}>
      <div className="flex items-center pl-[3px]">
        <Check label="自动计算网格尺寸" checked={auto} onChange={setAuto} />
        <button type="button" className={clsx('h-[23px] w-[116px] border-b-2 border-r-2', RAISED)}>选择部件</button>
      </div>
      <div className="flex items-center justify-between pl-[5px] pr-2.5">
        <Field id="size" label="网格划分尺寸(mm):" value="0.35" />
        <Field id="max" label="最大网格尺寸(mm):" value="1" />
        <Field id="min" label="最小Length(mm):" value="0.06" />
        <Field id="tet" label="tetcollapse:" value="0.1" className="pb-2" />
      </div>
      <div className="pl-[25px] pt-px"><Check label="四角处理" checked={corner} onChange={setCorner} /></div>
      <div className="mt-auto flex pb-px">
        {['几何清理', '2D划分网格', '3D网格划分', '实体网格自动调整', '退出'].map((t, i) => (
          <button key={t} type="button" className={clsx('h-[22px] whitespace-nowrap border-b-2 border-r-2', RAISED, i === 0 ? 'flex-[47]' : 'flex-[117]')}>{t}</button>
        ))}
      </div>
    </div>
  );
}

function RightPanel() {
  return (
    <section className="ml-0.5 flex min-h-0 min-w-0 flex-col border-l border-r border-[#8c8c8c] pr-1">
      <div className="flex h-[322px] shrink-0">
        <ViewRail />
        <Viewport />
      </div>
      <div className="flex h-[25px] shrink-0 items-center">
        <Handle />
        <Tool name="components"><Svg><Folder /><Slabs /></Svg></Tool>
        {['folderSlab', 'folderFlip', 'folderGray', 'folderLoad', 'folderSys'].map((n) => <Tool key={n} name={n} />)}
        <Caret /><Sep />
        {['remove', 'cards', 'folderMove', 'renumber'].map((n) => <Tool key={n} name={n} />)}
      </div>
      <div className="mb-2.5 flex h-[25px] shrink-0 items-center">
        <Handle />
        <Combo icon="shadeAuto" label="shading" options={['Auto']} className="w-[77px]" />
        <Tool name="shellWire" /><Caret />
        <Tool name="shellFill" /><Caret />
        <Tool name="cubeGlass" />
        <Sep />
        <Combo icon="cubeComp" label="color mode" options={['By Comp']} className="w-[83px]" />
        {['cubeGrid', 'cubeSolid', 'line', 'quad', 'slabBlue'].map((n) => (
          <span key={n} className="flex"><Tool name={n} /><Caret /></span>
        ))}
        <Tool name="tiles" />
        <Tool name="monitor" />
        <Handle className="w-2" />
        <Tool name="star" />
      </div>
      <MeshForm />
    </section>
  );
}

/* ---------- frame ---------- */

function TopToolbar() {
  return (
    <div className="flex h-[29px] shrink-0 items-center overflow-hidden">
      <Handle className="w-2" />
      {['addModel', 'open', 'save', 'importIcon'].map((n) => <Tool key={n} name={n} />)}
      <Caret />
      <Tool name="exportIcon" /><Caret /><Sep />
      <Tool name="user" />
      <Tool name="colorFolder" /><Caret />
      <Handle className="w-2" />
      <Tool name="fit" />
      <Tool name="back" />
      <Tool label="xy top"><Axis v={GREEN} h={RED} a="Y" b="X" /></Tool>
      <Tool label="xy bottom"><Axis v={GREEN} h={RED} down a="Y" b="X" /></Tool>
      <Tool label="xz left"><Axis v={BLUE} h={RED} a="Z" b="X" /></Tool>
      <Tool label="xz right"><Axis v={BLUE} h={RED} right a="Z" b="X" /></Tool>
      <Tool label="yz left"><Axis v={BLUE} h={GREEN} a="Z" b="Y" /></Tool>
      <Tool label="yz right"><Axis v={BLUE} h={GREEN} right a="Z" b="Y" /></Tool>
      <Tool name="iso" />
      <Tool name="screenCheck" />
      <Handle className="w-3.5" />
      {['zoomInOut', 'zoomCircle', 'rotate', 'hand', 'panH', 'panV', 'spin'].map((n) => <Tool key={n} name={n} />)}
      <Handle />
      {['distance', 'ruler', 'mass', 'cubeRed', 'cubeWire', 'cubeTop', 'meshArrow', 'meshCut', 'meshCheck'].map((n) => <Tool key={n} name={n} />)}
      <Sep />
      {['sum', 'sumBang', 'calc'].map((n) => <Tool key={n} name={n} />)}
    </div>
  );
}

function StatusBar() {
  const cell = 'flex h-full items-start gap-1 border-l-2 border-t-2 border-[#555] whitespace-nowrap';
  return (
    <footer className={clsx('flex h-[18px] shrink-0 items-end text-[11px] text-[#222]', SANS)}>
      <span className="min-w-0 flex-1 self-center pl-[11px] leading-3">HWDFX-初速度定义</span>
      <div className="flex h-4 gap-0.5 leading-3">
        <span className={clsx(cell, 'w-[97px]')} />
        <span className={clsx(cell, 'w-[98px]')}>Module Model</span>
        <span className={clsx(cell, 'w-[112px] pl-[3px]')}><i className="mt-0.5 h-2 w-2 border border-[#333] bg-[#c0c0c0]" />rigid_ground</span>
        <span className={clsx(cell, 'w-[113px] pl-[3px]')}><i className="mt-0.5 h-2 w-2 border border-[#222] bg-[#0000f0]" />Gravity</span>
      </div>
    </footer>
  );
}

function Watermark() {
  return (
    <div className="pointer-events-none absolute bottom-[30px] right-9 flex items-center gap-1">
      <svg viewBox="0 0 44 38" className="h-[38px] w-11 drop-shadow-[1px_1px_0_#999]" aria-hidden="true">
        <path d="M15 1C7 1 1 6.500 1 13.500C1 17.500 3 20.500 6 22.800L4.500 27L9.500 24.800C11 25.400 13 25.700 15 25.700C23 25.700 29.500 20.500 29.500 13.500C29.500 6.500 23 1 15 1Z" fill="#fdfdfd" />
        <path d="M30 12.500C23 12.500 17.500 17.500 17.500 23.500C17.500 29.700 23 34.500 30 34.500C31.500 34.500 33 34.300 34.500 33.800L38.800 36L37.800 32.300C41 30.200 43 27.200 43 23.500C43 17.500 37.200 12.500 30 12.500Z" fill="#fff" stroke="#c4c4c4" strokeWidth="0.8" />
        <path d="M8.500 9.500Q10.500 7 12.500 9.500M18 9.500Q20 7 22 9.500M24 20.500Q25.700 18.500 27.400 20.500M33 20.500Q34.700 18.500 36.400 20.500" fill="none" stroke="#888" strokeWidth="1.3" />
      </svg>
      <span className="font-['Noto_Sans_CJK_SC',sans-serif] text-[27px] leading-9 text-white [text-shadow:1px_1px_1px_#777,0_0_1px_#999]">有限元科技</span>
    </div>
  );
}

export default function App() {
  return (
    <div className="relative flex h-screen flex-col overflow-hidden bg-[#f0f0f0] text-black">
      <header className={clsx('shrink-0 bg-white text-[10px] text-[#111]', UI_FONT)}>
        <div className="flex h-[18px] items-center gap-1 pl-0.5">
          <Svg className="h-3 w-3">{ICONS.app}</Svg>
          <h1>drop_breakage.hm* - HyperMesh v13.0</h1>
          <div className="ml-auto flex gap-7 pr-3.5">
            {['M0 5H8', 'M1 3H6V8H1ZM3 3V1H8V6H6', 'M0 0L8 8M8 0L0 8'].map((d, i) => (
              <button key={d} type="button" aria-label={['minimize', 'restore', 'close'][i]}>
                <svg viewBox="-0.500 -0.500 9 9" fill="none" className="h-[9px] w-[9px]" aria-hidden="true"><path d={d} stroke="#222" /></svg>
              </button>
            ))}
          </div>
        </div>
        <nav className="flex h-[15px] items-center gap-2.5 pl-[5px]">
          {MENU.map(([a, key, b]) => (
            <button key={a + key + b} type="button" className="whitespace-nowrap leading-[15px]">{a}<u className="underline-offset-1">{key}</u>{b}</button>
          ))}
        </nav>
      </header>
      <TopToolbar />
      <main className="grid min-h-0 flex-1 grid-cols-[minmax(0,553fr)_minmax(0,525fr)] pr-0.5">
        <LeftPanel />
        <RightPanel />
      </main>
      <StatusBar />
      <Watermark />
    </div>
  );
}
